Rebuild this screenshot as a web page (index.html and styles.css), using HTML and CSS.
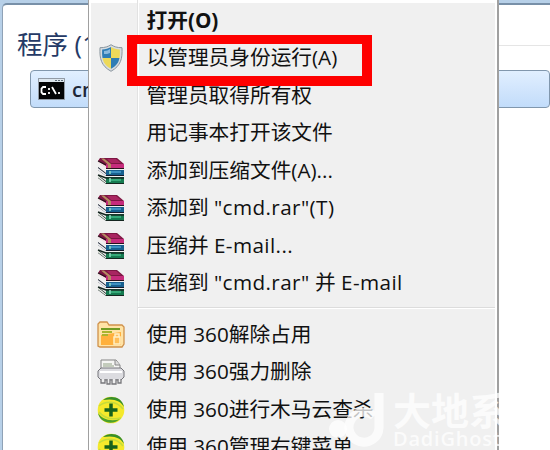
FILE: index.html
```
<!DOCTYPE html>
<html lang="zh-CN">
<head>
    <meta charset="UTF-8">
    <meta name="viewport" content="width=device-width, initial-scale=1.0">
    <title>程序</title>
    <link rel="stylesheet" href="styles.css">
</head>
<body>
<svg class="defs" width="0" height="0">
    <symbol id="rar" viewBox="0 0 28 28">
        <!-- green book -->
        <path d="M1 18l8 6h18v3H9l-8-6z" fill="#14251f"/>
        <path d="M1 18.500l8 6.500v1.500l-8-6z" fill="#e8ece6"/>
        <path d="M9 20h18v6H9z" fill="#157a50"/>
        <path d="M12 21h12v3H12z" fill="#35a978"/>
        <path d="M1 18l8 3h18" fill="none" stroke="#14251f" stroke-width="1.500"/>
        <!-- blue book -->
        <path d="M1 10l8 6h18v3H9l-8-6z" fill="#141b2b"/>
        <path d="M1 11l8 6v2l-8-6z" fill="#eceef2"/>
        <path d="M9 13h18v5H9z" fill="#17608f"/>
        <path d="M12 14h12v2H12z" fill="#3d90c0"/>
        <!-- red book -->
        <path d="M3 1h17l7 6v4H9L1 4z" fill="#7d1743"/>
        <path d="M10 2h9l5 4H14z" fill="#a92561"/>
        <path d="M9 7h18v4H9z" fill="#c62c7c"/>
        <path d="M1 4l8 5v2.500L1 6z" fill="#f3e3e5"/>
        <path d="M4 1.500h3l7 5.500v4h-3V7.500z" fill="#b58b61"/>
        <path d="M1 4l8 4M9 11.500h18" stroke="#29121c" stroke-width="1.200"/>
        <path d="M13 14v3M13 21v4" stroke="#8ad8bd" stroke-width="1.500"/>
    </symbol>
    <symbol id="plus" viewBox="0 0 28 28">
        <circle cx="14" cy="14" r="13.300" fill="#f5e92b"/>
        <path d="M6 4C12-1 25 0 27 11c-3-6-10-9-21-7z" fill="#368f2a"/>
        <path d="M23 23C17 29 3 28 1 17c4 6 12 9 22 6z" fill="#4ba02b"/>
        <path d="M2 10C9 4 20 5 26 13M2 16c5 6 13 8 22 6" stroke="#c5dc3a" fill="none" stroke-width="1.500"/>
        <path d="M14 7.500v13M7.500 14h13" stroke="#17621c" stroke-width="3.500"/>
    </symbol>
</svg>
<div class="window">
    <div class="list">
        <div class="group">程序 (1)</div>
        <div class="result">
            <svg class="cmd-icon" viewBox="0 0 27 22">
                <path d="M.5.500h26v21H.5z" fill="#030406" stroke="#919aa5"/>
                <path d="M1 1h25v3H1z" fill="#dce6ee"/>
                <path d="M17 2.500h2M20 2.500h2M23 2.500h2" stroke="#5d6b79"/>
                <path d="M8 9H5L3.500 10.500v4L5 16h3M11 10v2M11 14v2M14 9l4 7M21 14v2" fill="none" stroke="#fff" stroke-width="1.800"/>
            </svg>
            <span class="result-name">cmd.exe</span>
        </div>
    </div>
</div>
<div class="menu">
    <div class="item default"><span class="icon"></span><span class="label">打开(O)</span></div>
    <div class="item">
        <span class="icon">
            <svg class="shield" viewBox="0 0 24 28">
                <path d="M12 .7c3 2 6 3 11 3 .5 11-1 18-11 23.600C2 21.700.500 14.700 1 3.700c5 0 8-1 11-3z" fill="#d6dce1" stroke="#8b979f"/>
                <path d="M12 3v11H3.500C3 11 3 8 3.200 5.500 7 5.500 9 4.500 12 3zM12 14h8.500c-1 5-3.500 8-8.500 10.800z" fill="#2f7db5"/>
                <path d="M12 3c3 1.500 5 2.500 8.800 2.500.2 2.500.2 5.500-.3 8.500H12zM12 14v10.800C7 22 4.500 19 3.500 14z" fill="#edd95a"/>
                <path d="M5 7c3 0 4-1 6-2v4c-2 1-4 1-6 1z" fill="#8abade"/>
            </svg>
        </span>
        <span class="label">以管理员身份运行(A)</span>
    </div>
    <div class="item"><span class="icon"></span><span class="label">管理员取得所有权</span></div>
    <div class="item"><span class="icon"></span><span class="label">用记事本打开该文件</span></div>
    <div class="item"><span class="icon"><svg class="rar"><use href="#rar"/></svg></span><span class="label">添加到压缩文件(A)...</span></div>
    <div class="item"><span class="icon"><svg class="rar"><use href="#rar"/></svg></span><span class="label">添加到 <span class="latin">"cmd.rar"(T)</span></span></div>
    <div class="item"><span class="icon"><svg class="rar"><use href="#rar"/></svg></span><span class="label">压缩并 <span class="latin">E-mail...</span></span></div>
    <div class="item"><span class="icon"><svg class="rar"><use href="#rar"/></svg></span><span class="label">压缩到 <span class="latin">"cmd.rar"</span> 并 <span class="latin">E-mail</span></span></div>
    <div class="separator"></div>
    <div class="item">
        <span class="icon">
            <svg class="folder" viewBox="0 0 28 27">
                <path d="M1 25V3l2-2h7l2 3h13l2 2v17l-2 3H3z" fill="#ffe3a6" stroke="#cf914b" stroke-width="1.300"/>
                <path d="M4 14l20-3v13H4z" fill="#ffb03c"/>
                <path d="M4 7h19v2H4z" fill="#719b23"/>
                <path d="M5 11h10M5 14h6" stroke="#a9b52d" stroke-width="2"/>
                <path d="M17 16h6v7h-6zM18 16v-3h4v3" fill="#ffbe58" stroke="#fff0c5" stroke-width="1.500"/>
            </svg>
        </span>
        <span class="label">使用 360解除占用</span>
    </div>
    <div class="item">
        <span class="icon">
            <svg class="shredder" viewBox="0 0 28 27">
                <path d="M4 10V1h15l4 5v4" fill="#f5f5f3" stroke="#858585"/>
                <path d="M6 5h9M6 7h11" stroke="#91a184"/>
                <path d="M18 1v5h5" fill="#ddd" stroke="#888"/>
                <path d="M1 12l3-3h20l3 3v6l-3 3H4l-3-3z" fill="#dcdce0" stroke="#74747a"/>
                <path d="M3 13h22" stroke="#fff" stroke-width="2"/>
                <path d="M4 20v4h4v-4M10 20v5h3v-5M15 20v5h4v-5M21 20v4h3v-4" fill="#eee" stroke="#77777b" stroke-width="1.300"/>
            </svg>
        </span>
        <span class="label">使用 360强力删除</span>
    </div>
    <div class="item"><span class="icon"><svg class="plus"><use href="#plus"/></svg></span><span class="label">使用 360进行木马云查杀</span></div>
    <div class="item"><span class="icon"><svg class="plus"><use href="#plus"/></svg></span><span class="label">使用 360管理右键菜单</span></div>
</div>
<div class="highlight"></div>
<div class="watermark">
    <svg class="watermark-logo" viewBox="0 0 58 56">
        <path d="M51 1v35a15 15 0 1 1-5-12" fill="none" stroke="currentColor" stroke-width="9"/>
        <circle cx="10" cy="37" r="9" fill="currentColor"/>
    </svg>
    <div class="watermark-text">
        <div class="watermark-name">大地系</div>
        <div class="watermark-site">DadiGhost</div>
    </div>
</div>
</body>
</html>
```
FILE: styles.css
```
body {
    margin: 0;
    height: 450px;
    overflow: hidden;
    background-color: #b7d0e8;
    font-family: "Open Sans", "Noto Sans CJK SC", sans-serif;
    color: #111;
}

.defs {
    position: absolute;
}

.window {
    box-sizing: border-box;
    height: 450px;
    padding: 3px 0 0 2px;
}

.list {
    box-sizing: border-box;
    height: 447px;
    padding: 22px 0 0 14px;
    background: linear-gradient(#e5e5e5, #e5e5e5) 400px 40px / 200px 1px no-repeat #fff;
    border-top: 2px solid #7890a8;
    border-left: 1px solid #8fa2b6;
    border-top-left-radius: 5px;
}

.group {
    height: 43px;
    line-height: 34px;
    font-size: 25.5px;
    color: #253a66;
    white-space: nowrap;
}

.result {
    box-sizing: border-box;
    display: flex;
    align-items: center;
    height: 38px;
    margin-left: 13px;
    padding: 0 7px;
    gap: 7px;
    border: 1px solid #8197ad;
    border-radius: 4px;
    background: linear-gradient(#e1efff, #c2dcfa);
}

.cmd-icon {
    width: 27px;
    height: 22px;
}

.result-name {
    font-size: 20px;
    font-weight: 600;
    color: #1c2638;
}

/* context menu */
.menu {
    position: absolute;
    top: -5px;
    left: 88px;
    box-sizing: border-box;
    width: 411px;
    height: 455px;
    overflow: hidden;
    padding: 4px 0 0;
    border: 2px solid #a0a0a0;
    border-left-width: 1px;
    border-bottom: none;
    background: linear-gradient(90deg, #fff 2px, transparent 2px, transparent 48px, #e2e2e2 48px, #e2e2e2 49px, #fff 49px, #fff 50px, transparent 50px, transparent 406px, #fff 406px), linear-gradient(#fff 6px, #f0f0f0 6px);
}

.item {
    display: flex;
    align-items: center;
    height: 37.5px;
}

.icon {
    display: flex;
    justify-content: center;
    width: 44px;
    margin-right: 13.5px;
    flex-shrink: 0;
}

.icon svg {
    position: relative;
    top: 1px;
}

.label {
    font-size: 20.7px;
    line-height: 30px;
    white-space: nowrap;
}

.latin {
    letter-spacing: 0.4px;
}

.default .label {
    font-weight: bold;
}

.separator {
    height: 1px;
    margin: 6px 2px 6px 49px;
    background-color: #dcdcdc;
    border-bottom: 1px solid #fff;
}

.shield {
    width: 24px;
    height: 28px;
}

.rar {
    width: 28px;
    height: 28px;
}

.folder,
.shredder {
    width: 28px;
    height: 27px;
}

.plus {
    width: 28px;
    height: 28px;
}

/* red frame around the admin item */
.highlight {
    position: absolute;
    top: 35px;
    left: 127px;
    box-sizing: border-box;
    width: 245px;
    height: 51px;
    border: 10px solid #fe0000;
    border-top-width: 9px;
}

.watermark {
    position: absolute;
    top: 392px;
    left: 328px;
    display: flex;
    gap: 7px;
    color: rgba(255, 255, 255, 0.75);
}

.watermark-logo {
    width: 58px;
    height: 56px;
}

.watermark-name {
    height: 37px;
    line-height: 37px;
    font-size: 38px;
    font-weight: bold;
    white-space: nowrap;
}

.watermark-site {
    height: 20px;
    line-height: 20px;
    font-size: 20px;
    font-weight: 600;
    letter-spacing: 0.8px;
}
```
